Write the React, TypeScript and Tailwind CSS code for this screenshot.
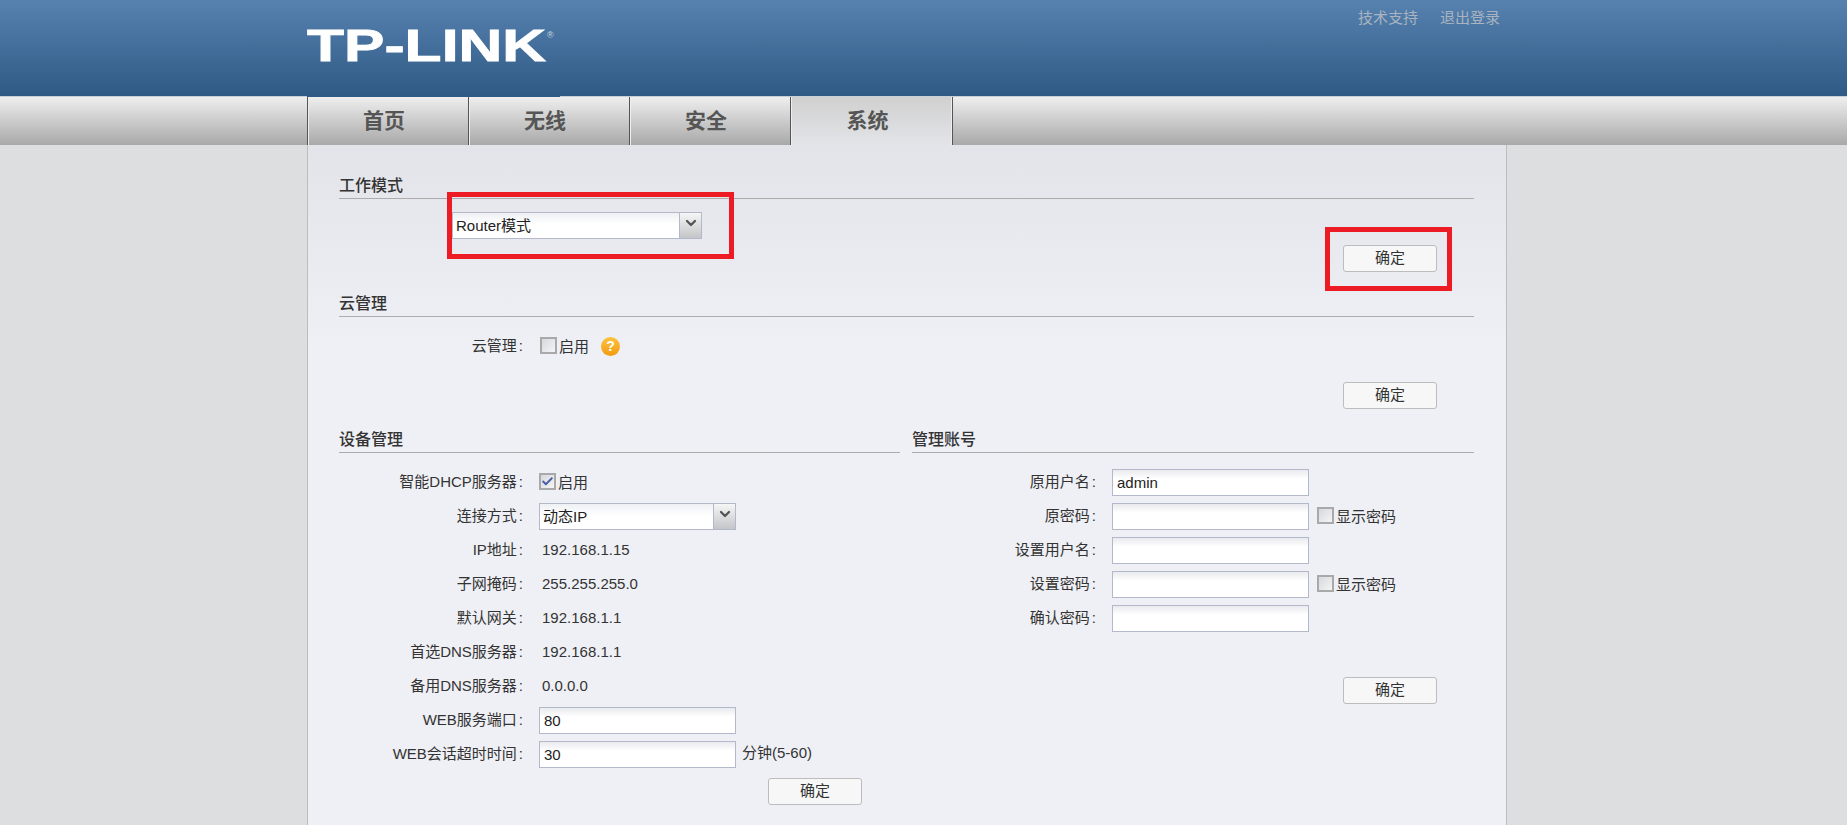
import React from "react";
import { Check, ChevronDown } from "lucide-react";

const tabs = ["首页", "无线", "安全", "系统"];

const deviceRows = [
  { label: "IP地址", value: "192.168.1.15" },
  { label: "子网掩码", value: "255.255.255.0" },
  { label: "默认网关", value: "192.168.1.1" },
  { label: "首选DNS服务器", value: "192.168.1.1" },
  { label: "备用DNS服务器", value: "0.0.0.0" },
];

const SectionTitle: React.FC<{ title: string }> = ({ title }) => (
  <div className="h-[28px] border-b border-[#acacac] text-[16px] leading-[29px] font-medium text-[#333]">
    {title}
  </div>
);

const ConfirmButton: React.FC = () => (
  <button className="w-[94px] h-[27px] rounded-[3px] border border-[#bcbcbc] bg-[#f7f7f8] text-[15px] text-[#333]">
    确定
  </button>
);

const Checkbox: React.FC<{ checked?: boolean; label: string }> = ({ checked, label }) => (
  <div className="flex items-center gap-[2px] h-[27px]">
    <div className="relative -top-[1px] w-[17px] h-[17px] border-2 border-[#a9a9a9] bg-gradient-to-br from-[#d8d9de] to-[#f4f4f6] flex items-center justify-center">
      {checked && <Check size={15} strokeWidth={3.5} className="text-[#4a5fa8]" />}
    </div>
    <span className="relative top-[1px]">{label}</span>
  </div>
);

const TextInput: React.FC<{ value?: string }> = ({ value }) => (
  <input
    readOnly
    value={value ?? ""}
    className="w-[197px] h-[27px] px-[4px] border border-[#b4b8cb] bg-gradient-to-b from-[#e9eaee] via-white via-[35%] to-white text-[15px] text-[#222] outline-none"
  />
);

const SelectBox: React.FC<{ value: string; width: string }> = ({ value, width }) => (
  <div className={`flex h-[27px] border border-[#b4b8cb] bg-gradient-to-b from-[#eef0f3] via-white via-[45%] to-white ${width}`}>
    <span className="flex-1 pl-[3px] leading-[25px] text-[#222]">{value}</span>
    <span className="w-[22px] border-l border-[#b4b8cb] bg-gradient-to-b from-[#f6f6f6] to-[#c4c5c8] flex justify-center pt-[2px]">
      <ChevronDown size={16} strokeWidth={3.5} className="text-[#555]" />
    </span>
  </div>
);

const RowLabel: React.FC<{ label: string }> = ({ label }) => (
  <div className="w-[184px] text-right shrink-0">
    {label}
    <span className="ml-[2px]">:</span>
  </div>
);

const FormRow: React.FC<{ label: string; children: React.ReactNode }> = ({ label, children }) => (
  <div className="flex items-center h-[27px] mb-[7px]">
    <RowLabel label={label} />
    <div className="ml-[16px] flex items-center">{children}</div>
  </div>
);

const App: React.FC = () => {
  return (
    <div className="relative h-[825px] w-[1847px] overflow-hidden bg-[#dddee0] text-[15px] text-[#333] font-['Liberation_Sans','Noto_Sans_CJK_SC',sans-serif]">
      {/* header */}
      <header className="h-[96px] bg-gradient-to-b from-[#5782b0] to-[#2f5a85]">
        <div className="ml-[307px] w-[1199px] flex justify-between">
          <svg width="250" height="70" viewBox="0 0 250 70" className="mt-[22px]">
            <text
              x="0"
              y="39"
              fontFamily="Liberation Sans, sans-serif"
              fontWeight="700"
              fontSize="44"
              textLength="239"
              lengthAdjust="spacingAndGlyphs"
              fill="#fff"
              stroke="#fff"
              strokeWidth="0.8"
            >
              TP-LINK
            </text>
            <text x="240" y="16" fontFamily="Liberation Sans, sans-serif" fontSize="9" fill="#c8d4e0">
              ®
            </text>
          </svg>
          <div className="flex gap-[22px] pr-[6px] pt-[7px] text-[#a9b4c0] leading-[22px] h-[29px]">
            <a>技术支持</a>
            <a>退出登录</a>
          </div>
        </div>
      </header>

      {/* nav */}
      <nav className="relative h-[49px] bg-gradient-to-b from-[#efefef] to-[#a9a9a9] border-t border-[#c6d0da]">
        <div className="absolute -top-[1px] left-[307px] w-[253px] h-[1px] bg-[#2f5a85]" />
        <div className="ml-[307px] flex h-full">
          {tabs.map((tab, i) => (
            <div
              key={tab}
              className={
                i === 3
                  ? "w-[163px] h-full border-x border-[#555] shadow-[inset_1px_0_0_#eee,inset_-1px_0_0_#eee] bg-gradient-to-b from-[#d0d0d0] to-[#e3e4e8] flex items-center justify-center pr-[8px] text-[21px] font-bold text-[#555]"
                  : "w-[161px] h-full border-l border-[#555] shadow-[inset_1px_0_0_#eee] flex items-center justify-center pr-[8px] text-[21px] font-bold text-[#555]"
              }
            >
              {tab}
            </div>
          ))}
        </div>
      </nav>

      {/* content */}
      <main className="ml-[307px] w-[1200px] h-[680px] border-x border-[#bdbdbd] bg-gradient-to-b from-[#e3e4e9] to-[#eff0f5] to-[30%] pl-[31px] pr-[32px] pt-[26px]">
        <SectionTitle title="工作模式" />
        <div className="ml-[113px] mt-[13px]">
          <SelectBox value="Router模式" width="w-[250px]" />
        </div>
        <div className="flex justify-end pr-[37px] mt-[6px]">
          <ConfirmButton />
        </div>

        <div className="mt-[17px]">
          <SectionTitle title="云管理" />
        </div>
        <div className="mt-[16px]">
          <div className="flex items-center h-[27px]">
            <RowLabel label="云管理" />
            <div className="ml-[17px] flex items-center">
              <Checkbox label="启用" />
              <span className="ml-[12px] w-[19px] h-[19px] rounded-full bg-gradient-to-b from-[#fdc33c] to-[#f29a0c] text-white text-[14px] font-bold leading-[19px] text-center">
                ?
              </span>
            </div>
          </div>
        </div>
        <div className="flex justify-end pr-[37px] mt-[22px]">
          <ConfirmButton />
        </div>

        <div className="grid grid-cols-[561px_562px] gap-x-[12px] mt-[16px]">
          <div>
            <SectionTitle title="设备管理" />
            <div className="mt-[16px]">
              <FormRow label="智能DHCP服务器">
                <Checkbox checked label="启用" />
              </FormRow>
              <FormRow label="连接方式">
                <SelectBox value="动态IP" width="w-[197px]" />
              </FormRow>
              {deviceRows.map((row) => (
                <FormRow key={row.label} label={row.label}>
                  <span className="ml-[3px]">{row.value}</span>
                </FormRow>
              ))}
              <FormRow label="WEB服务端口">
                <TextInput value="80" />
              </FormRow>
              <FormRow label="WEB会话超时时间">
                <TextInput value="30" />
                <span className="ml-[6px] relative -top-[1px]">分钟(5-60)</span>
              </FormRow>
            </div>
            <div className="flex justify-end pr-[38px] mt-[10px]">
              <ConfirmButton />
            </div>
          </div>

          <div>
            <SectionTitle title="管理账号" />
            <div className="mt-[16px]">
              <FormRow label="原用户名">
                <TextInput value="admin" />
              </FormRow>
              <FormRow label="原密码">
                <TextInput />
                <div className="ml-[8px]">
                  <Checkbox label="显示密码" />
                </div>
              </FormRow>
              <FormRow label="设置用户名">
                <TextInput />
              </FormRow>
              <FormRow label="设置密码">
                <TextInput />
                <div className="ml-[8px]">
                  <Checkbox label="显示密码" />
                </div>
              </FormRow>
              <FormRow label="确认密码">
                <TextInput />
              </FormRow>
            </div>
            <div className="flex justify-end pr-[37px] mt-[45px]">
              <ConfirmButton />
            </div>
          </div>
        </div>
      </main>

      {/* red annotation boxes drawn over the page */}
      <div className="absolute left-[447px] top-[192px] w-[287px] h-[67px] border-[5px] border-[#ed1c24]" />
      <div className="absolute left-[1325px] top-[227px] w-[127px] h-[64px] border-[5px] border-[#ed1c24]" />
    </div>
  );
};

export default App;
